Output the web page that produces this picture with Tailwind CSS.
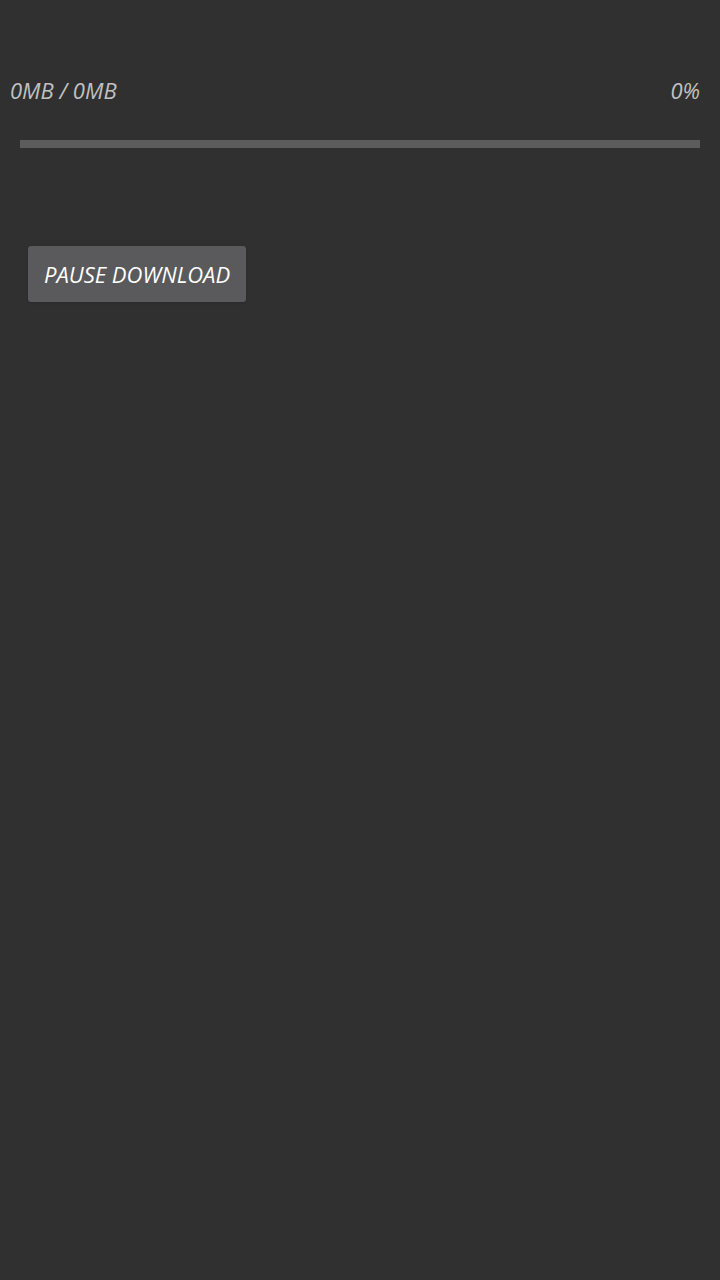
<!DOCTYPE html>
<html lang="en">
<head>
  <meta charset="UTF-8">
  <meta name="viewport" content="width=device-width, initial-scale=1">
  <title>Download</title>
  <script src="https://cdn.jsdelivr.net/npm/@tailwindcss/browser@4"></script>
</head>
<body class="bg-[#303030] min-h-screen text-[#c1c1c1] text-[22px] italic font-['Open_Sans',sans-serif]">

  <main class="pt-[72px]">

    <!-- Download status -->
    <div class="flex justify-between pl-[10px] pr-5 leading-9">
      <label for="progress">0MB / 0MB</label>
      <span>0%</span>
    </div>

    <!-- Progress bar -->
    <div class="px-5 mt-8">
      <progress id="progress" value="0" max="100" class="block w-full h-2 appearance-none bg-[#5c5c5c] [&::-webkit-progress-bar]:bg-[#5c5c5c] [&::-webkit-progress-value]:bg-teal-300"></progress>
    </div>

    <button type="button" class="mt-[98px] ml-7 h-14 px-4 rounded-[3px] bg-[#5a5a5c] text-white shadow">PAUSE DOWNLOAD</button>

  </main>

</body>
</html>
